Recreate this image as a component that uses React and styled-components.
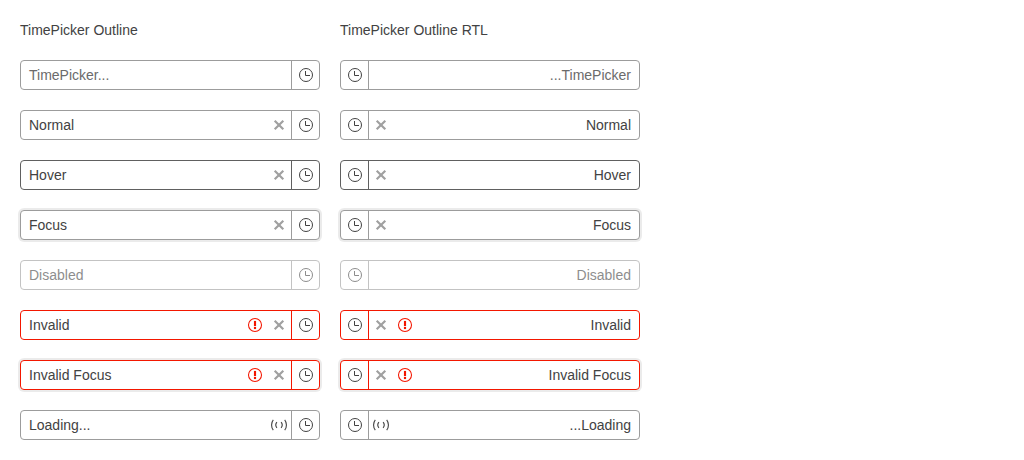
import React from "react";
import styled, { createGlobalStyle, css } from "styled-components";

const GlobalStyle = createGlobalStyle`
  body {
    margin: 0;
    background: #fff;
    color: #424242;
    font: 14px/20px "Liberation Sans", Arial, sans-serif;
  }
`;

const Page = styled.main`
  display: grid;
  grid-template-columns: 300px 300px;
  gap: 20px;
  padding: 20px;
`;

const Column = styled.section`
  display: flex;
  flex-direction: column;
  gap: 20px;
`;

const Title = styled.div`
  height: 20px;
`;

const borders = {
  hover: "#606060",
  invalid: "#f31700",
  invalidFocus: "#f31700",
};

const Picker = styled.div`
  --line: ${({ $state }) => borders[$state] || "#9c9c9c"};
  box-sizing: border-box;
  display: flex;
  height: 30px;
  border: 1px solid var(--line);
  border-radius: 4px;
  background: #fff;
  ${({ $state }) =>
    /focus/i.test($state) &&
    css`
      box-shadow: 0 0 0 2px rgba(0, 0, 0, 0.08);
    `}
  ${({ $state }) =>
    $state === "disabled" &&
    css`
      opacity: 0.6;
    `}
`;

const Value = styled.span`
  flex: 1;
  padding: 4px 8px;
  white-space: nowrap;
  color: ${({ $muted }) => ($muted ? "#6b6b6b" : "inherit")};
`;

const Slot = styled.span`
  display: flex;
  align-items: center;
  padding: 0 4px;
  color: ${({ $tone }) => $tone || "inherit"};
`;

const ClockButton = styled.span`
  box-sizing: border-box;
  display: flex;
  align-items: center;
  width: 28px;
  padding-left: 6px;
  padding-right: 5px;
  border-inline-start: 1px solid var(--line);
`;

const Icon = styled.svg.attrs({ width: 16, height: 16, viewBox: "0 0 16 16", fill: "none" })`
  display: block;
  flex: none;
`;

const ClockIcon = () => (
  <Icon>
    <circle cx="8" cy="8" r="6.5" stroke="currentColor" />
    <path d="M7.5 4v4.5H12" stroke="currentColor" />
  </Icon>
);

const ClearIcon = () => (
  <Icon>
    <path d="M3.7 3.7l8.6 8.6M12.3 3.7l-8.6 8.6" stroke="currentColor" strokeWidth="2.2" />
  </Icon>
);

const WarningIcon = () => (
  <Icon>
    <circle cx="8" cy="8" r="6.5" stroke="currentColor" strokeWidth="1.05" />
    <path d="M7 4h2v5H7zM7 10h2v2H7z" fill="currentColor" stroke="currentColor" strokeWidth="0.15" />
  </Icon>
);

const LoadingIcon = () => (
  <Icon>
    <path
      d="M2.3 2.8C0 5.6 0 10.4 2.3 13.2M13.7 2.8c2.3 2.8 2.3 7.6 0 10.4"
      stroke="currentColor"
      strokeWidth="1.1"
    />
    <path
      d="M5.9 5.2c-1.4 1.7-1.4 3.9 0 5.6M10.1 5.2c1.4 1.7 1.4 3.9 0 5.6"
      stroke="currentColor"
      strokeWidth="1.1"
    />
  </Icon>
);

const rows = [
  { text: "TimePicker...", state: "placeholder" },
  { text: "Normal", state: "normal", clear: true },
  { text: "Hover", state: "hover", clear: true },
  { text: "Focus", state: "focus", clear: true },
  { text: "Disabled", state: "disabled" },
  { text: "Invalid", state: "invalid", clear: true, warning: true },
  { text: "Invalid Focus", state: "invalidFocus", clear: true, warning: true },
  { text: "Loading...", state: "loading", loading: true },
];

function TimePicker({ text, state, clear, warning, loading }) {
  return (
    <Picker $state={state}>
      <Value $muted={state === "placeholder"}>{text}</Value>
      {warning && <Slot $tone="#f31700"><WarningIcon /></Slot>}
      {clear && <Slot $tone="#a0a0a0"><ClearIcon /></Slot>}
      {loading && <Slot><LoadingIcon /></Slot>}
      <ClockButton><ClockIcon /></ClockButton>
    </Picker>
  );
}

export default function App() {
  return (
    <>
      <GlobalStyle />
      <Page>
        <Column>
          <Title>TimePicker Outline</Title>
          {rows.map((row) => <TimePicker key={row.state} {...row} />)}
        </Column>
        <Column dir="rtl">
          <Title dir="ltr">TimePicker Outline RTL</Title>
          {rows.map((row) => <TimePicker key={row.state} {...row} />)}
        </Column>
      </Page>
    </>
  );
}
